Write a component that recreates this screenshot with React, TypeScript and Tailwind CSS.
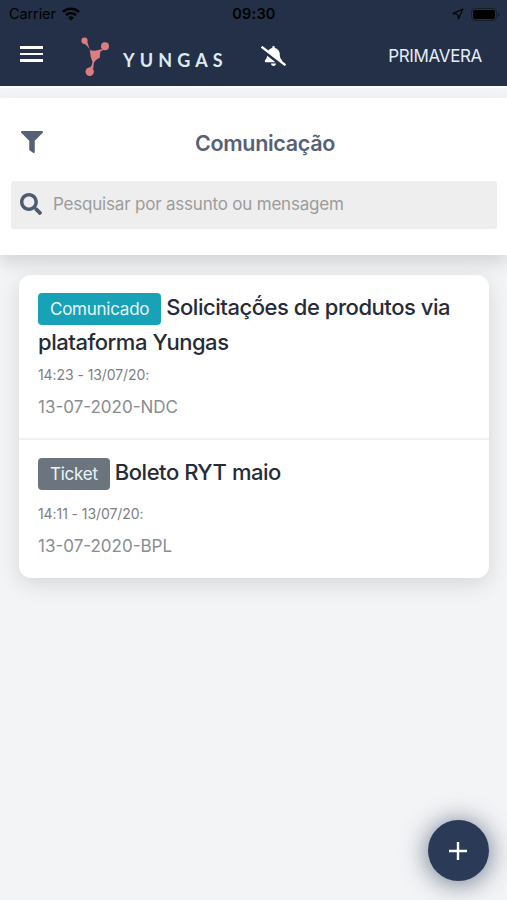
import { FaBellSlash, FaFilter, FaSearch } from "react-icons/fa";

type MessageKind = "comunicado" | "ticket";

interface Message {
	kind: MessageKind;
	title: string;
	date: string;
	body: string;
}

const KIND_LABELS: Record<MessageKind, string> = {
	comunicado: "Comunicado",
	ticket: "Ticket",
};

const KIND_STYLES: Record<MessageKind, string> = {
	comunicado: "bg-[#17a2b8]",
	ticket: "bg-[#6c757d]",
};

const MESSAGES: Message[] = [
	{
		kind: "comunicado",
		title: "Solicitaçṍes de produtos via plataforma Yungas",
		date: "14:23 - 13/07/20:",
		body: "13-07-2020-NDC",
	},
	{
		kind: "ticket",
		title: "Boleto RYT maio",
		date: "14:11 - 13/07/20:",
		body: "13-07-2020-BPL",
	},
];

const StatusBar = () => (
	<div className="grid h-7 grid-cols-3 items-center pl-[9px] pr-[7px] text-black">
		<div className="flex items-center gap-[6px]">
			<span className="text-[14.5px] leading-none tracking-[-0.1px]">Carrier</span>
			<svg width="18" height="14" viewBox="0 0 18 14" fill="none">
				<path d="M1 4.9a11.6 11.6 0 0 1 16 0" stroke="currentColor" strokeWidth="2.6" />
				<path d="M4 8.1a7.3 7.3 0 0 1 10 0" stroke="currentColor" strokeWidth="2.4" />
				<path d="M9 13.6 6.2 10.7a4 4 0 0 1 5.6 0z" fill="currentColor" />
			</svg>
		</div>
		<span className="pr-[1px] text-center text-[14.5px] font-semibold leading-none tracking-[0.2px]">
			09:30
		</span>
		<div className="flex items-center justify-end gap-[7px]">
			<svg width="12" height="12" viewBox="0 0 12 12" fill="none">
				<path
					d="M11 1 1 5.6l4.8.6.6 4.8z"
					stroke="currentColor"
					strokeWidth="1.1"
					strokeLinejoin="round"
				/>
			</svg>
			<svg width="29" height="13" viewBox="0 0 29 13" fill="none">
				<rect x="0.5" y="0.5" width="25" height="12" rx="3.5" stroke="currentColor" strokeOpacity="0.35" />
				<rect x="2" y="2" width="22" height="9" rx="2" fill="currentColor" />
				<path d="M27 4.3v4.4q1.5-.7 1.5-2.2T27 4.3" fill="currentColor" fillOpacity="0.4" />
			</svg>
		</div>
	</div>
);

const Logo = () => (
	<div className="flex items-start">
		<svg width="29" height="40" viewBox="0 0 29 40" fill="#dc7d81">
			<circle cx="3.5" cy="3.7" r="3.1" />
			<circle cx="24" cy="9.3" r="4" />
			<circle cx="8.7" cy="34.8" r="4.2" />
			<path d="M1.5 6.1Q5.4 7.2 9.2 13.2q5 1.2 10.3-.6l1.8-.4 1.2.8-2.9 1.2q-1 3 -.7 6.2-3.6 1.7-5.9 5-.6 3.6-.8 6.4L5.3 32.1q5.5-1.2 6.2-7.2Q9.2 19.4 9 14.4 7.9 9.8 6.3 5.1z" />
		</svg>
		<span className="ml-[13px] mt-[12px] font-['Lato','Liberation_Sans',sans-serif] text-[18px] font-bold leading-[22px] tracking-[5.1px] text-[#dfe9f1]">
			YUNGAS
		</span>
	</div>
);

const Header = () => (
	<header className="h-[88px] border-b-2 border-[#fbfbfc] bg-[#243048]">
		<StatusBar />
		<div className="flex h-[58px] items-start pl-5 pr-[25px] text-white">
			<button aria-label="Menu" className="mt-[18px] flex w-[23px] flex-col gap-[4px]">
				<span className="h-[2.5px] bg-white" />
				<span className="h-[2.5px] bg-white" />
				<span className="h-[2.5px] bg-white" />
			</button>
			<div className="ml-[38px] mt-[9px] w-[180px]">
				<Logo />
			</div>
			<FaBellSlash className="mt-[18px] h-5 w-[25px]" />
			<span className="ml-auto mt-[17px] text-[17px] leading-[22px] tracking-[-0.35px] text-[#e3edf8]">
				PRIMAVERA
			</span>
		</div>
	</header>
);

const SearchPanel = () => (
	<section className="relative mt-[10px] h-[157px] bg-white pl-[11px] pr-[10px] shadow-[0_8px_16px_rgba(0,0,0,0.13)]">
		<div className="flex h-[83px] items-center px-[10px] pt-[5px] text-[#566176]">
			<FaFilter className="h-[22px] w-[22px]" />
			<h1 className="flex-1 pt-[2px] text-center text-[21.5px] font-semibold leading-7 tracking-[-0.33px]">
				Comunicação
			</h1>
		</div>
		<div className="flex h-12 items-center rounded-[3px] bg-[#eeeeee] pl-[9px]">
			<FaSearch className="h-[22px] w-[22px] -translate-y-px text-[#4f5b72]" />
			<input
				className="ml-[11px] w-[420px] bg-transparent text-[17px] tracking-[-0.2px] outline-none placeholder:text-[#9c9c9c]"
				placeholder="Pesquisar por assunto ou mensagem"
			/>
		</div>
	</section>
);

const MessageItem: React.FC<Message> = ({ kind, title, date, body }) => (
	<article className="px-[19px] pb-[18px] pt-[15px]">
		<h2 className="min-h-[44px] text-[22px] font-[460] leading-[35px] tracking-[-0.46px] text-[#262b37]">
			<span
				className={`mr-[5px] inline-block rounded-[4px] px-3 align-middle text-[17px] font-normal leading-[32px] tracking-[-0.25px] text-[#eaf6fa] ${KIND_STYLES[kind]}`}
			>
				{KIND_LABELS[kind]}
			</span>
			{title}
		</h2>
		<p className="mt-[5px] text-[14px] leading-[20px] tracking-[-0.08px] text-[#7c8085]">{date}</p>
		<p className="mt-[9px] text-[17px] leading-[26px] text-[#898d93]">{body}</p>
	</article>
);

export default function App() {
	return (
		<div className="min-h-[900px] overflow-hidden bg-[#f3f4f6] font-['Inter','Liberation_Sans',sans-serif]">
			<Header />
			<SearchPanel />
			<main className="ml-[19px] mr-[18px] mt-[19.5px] divide-y-2 divide-[#f0f1f2] rounded-[12px] bg-white pb-px shadow-[0_6px_22px_rgba(0,0,0,0.12)]">
				{MESSAGES.map((message) => (
					<MessageItem key={message.body} {...message} />
				))}
			</main>
			<button
				aria-label="Adicionar"
				className="fixed bottom-[19px] right-[18.5px] flex h-[61px] w-[61px] items-center justify-center rounded-full bg-[#2a3a57] shadow-[0_2px_24px_2px_rgba(42,58,87,0.6)]"
			>
				<svg width="18" height="18" viewBox="0 0 18 18" stroke="white" strokeWidth="2.4">
					<path d="M9 0v18M0 9h18" />
				</svg>
			</button>
		</div>
	);
}
